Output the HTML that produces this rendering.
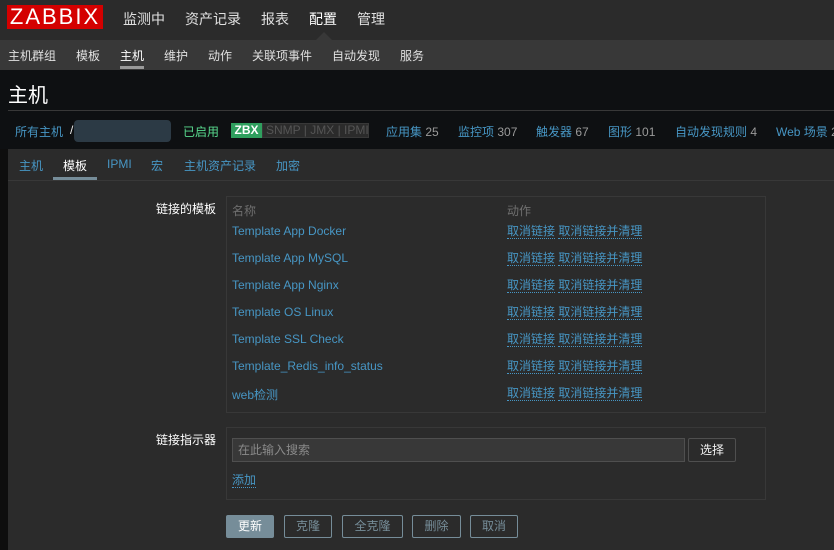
<!DOCTYPE html>
<html><head><meta charset="utf-8"><style>
*{margin:0;padding:0;box-sizing:border-box}
body{width:834px;height:550px;overflow:hidden;background:#0e0e0e;font-family:"Liberation Sans","Noto Sans CJK SC",sans-serif;font-size:12px;color:#f2f2f2;position:relative}
.a{position:absolute;white-space:nowrap}
.lk{color:#4796c4}
.dl{color:#4796c4;border-bottom:1px dotted #4796c4;line-height:14px}
.g{color:#9a9a9a}
.btn{position:absolute;top:515px;height:23px;border:1px solid #768d99;color:#768d99;font-size:12px;text-align:center;line-height:21px;border-radius:2px}
</style></head><body>
<div class="a" style="left:0;top:0;width:834px;height:40px;background:#2b2b2b"></div>
<div class="a" style="left:7px;top:5px;width:96px;height:24px;background:#d40000;color:#fff;font-size:22px;line-height:24px;text-align:center;letter-spacing:2px">ZABBIX</div>
<div class="a" style="top:9px;left:123px;font-size:14px;color:#e0e0e0">监测中</div>
<div class="a" style="top:9px;left:185px;font-size:14px;color:#e0e0e0">资产记录</div>
<div class="a" style="top:9px;left:261px;font-size:14px;color:#e0e0e0">报表</div>
<div class="a" style="top:9px;left:309px;font-size:14px;color:#fff">配置</div>
<div class="a" style="top:9px;left:357px;font-size:14px;color:#e0e0e0">管理</div>
<div class="a" style="left:316px;top:32px;width:0;height:0;border-left:8px solid transparent;border-right:8px solid transparent;border-bottom:8px solid #383838"></div>
<div class="a" style="left:0;top:40px;width:834px;height:30px;background:#383838"></div>
<div class="a" style="top:47px;left:8px;color:#e0e0e0">主机群组</div>
<div class="a" style="top:47px;left:76px;color:#e0e0e0">模板</div>
<div class="a" style="top:47px;left:120px;color:#fff">主机</div>
<div class="a" style="top:66px;left:120px;width:24px;height:3px;background:#999"></div>
<div class="a" style="top:47px;left:164px;color:#e0e0e0">维护</div>
<div class="a" style="top:47px;left:208px;color:#e0e0e0">动作</div>
<div class="a" style="top:47px;left:252px;color:#e0e0e0">关联项事件</div>
<div class="a" style="top:47px;left:332px;color:#e0e0e0">自动发现</div>
<div class="a" style="top:47px;left:400px;color:#e0e0e0">服务</div>
<div class="a" style="left:0;top:70px;width:834px;height:79px;background:#0e1012"></div>
<div class="a" style="top:79px;left:8px;font-size:20px;color:#fff">主机</div>
<div class="a" style="top:110px;left:8px;width:826px;height:1px;background:#383838"></div>
<div class="a lk" style="top:123px;left:15px">所有主机</div>
<div class="a" style="top:123px;left:70px">/</div>
<div class="a" style="top:120px;left:74px;width:97px;height:22px;background:#2c3a45;border-radius:4px"></div>
<div class="a" style="top:123px;left:183px;color:#59db8f">已启用</div>
<div class="a" style="top:123px;left:231px;width:31px;height:15px;background:#2f9f5e;color:#fff;font-weight:bold;text-align:center;line-height:15px">ZBX</div>
<div class="a" style="top:123px;left:262px;width:107px;height:15px;background:#2b2b2b;border:1px solid #383838;color:#555;line-height:13px;padding-left:3px">SNMP | JMX | IPMI</div>
<div class="a" style="top:123px;left:386px"><span class="lk">应用集</span> <span class="g">25</span></div>
<div class="a" style="top:123px;left:458px"><span class="lk">监控项</span> <span class="g">307</span></div>
<div class="a" style="top:123px;left:536px"><span class="lk">触发器</span> <span class="g">67</span></div>
<div class="a" style="top:123px;left:608px"><span class="lk">图形</span> <span class="g">101</span></div>
<div class="a" style="top:123px;left:675px"><span class="lk">自动发现规则</span> <span class="g">4</span></div>
<div class="a" style="top:123px;left:776px"><span class="lk">Web 场景</span> <span class="g">2</span></div>
<div class="a" style="left:8px;top:149px;width:826px;height:401px;background:#2b2b2b"></div>
<div class="a lk" style="top:157px;left:19px">主机</div>
<div class="a" style="top:157px;left:63px;color:#fff">模板</div>
<div class="a lk" style="top:157px;left:107px">IPMI</div>
<div class="a lk" style="top:157px;left:151px">宏</div>
<div class="a lk" style="top:157px;left:184px">主机资产记录</div>
<div class="a lk" style="top:157px;left:276px">加密</div>
<div class="a" style="top:180px;left:8px;width:826px;height:1px;background:#383838"></div>
<div class="a" style="top:177px;left:53px;width:44px;height:3px;background:#768d99"></div>
<div class="a" style="top:200px;left:156px;color:#fff">链接的模板</div>
<div class="a" style="top:196px;left:226px;width:540px;height:217px;border:1px solid #383838"></div>
<div class="a g" style="top:202px;left:232px;color:#6f6f6f">名称</div>
<div class="a g" style="top:202px;left:507px;color:#6f6f6f">动作</div>
<div class="a lk" style="top:224px;left:232px">Template App Docker</div>
<div class="a lk" style="top:251px;left:232px">Template App MySQL</div>
<div class="a lk" style="top:278px;left:232px">Template App Nginx</div>
<div class="a lk" style="top:305px;left:232px">Template OS Linux</div>
<div class="a lk" style="top:332px;left:232px">Template SSL Check</div>
<div class="a lk" style="top:359px;left:232px">Template_Redis_info_status</div>
<div class="a lk" style="top:386px;left:232px">web检测</div>
<div class="a" style="top:224px;left:507px"><span class="dl">取消链接</span> <span class="dl">取消链接并清理</span></div>
<div class="a" style="top:251px;left:507px"><span class="dl">取消链接</span> <span class="dl">取消链接并清理</span></div>
<div class="a" style="top:278px;left:507px"><span class="dl">取消链接</span> <span class="dl">取消链接并清理</span></div>
<div class="a" style="top:305px;left:507px"><span class="dl">取消链接</span> <span class="dl">取消链接并清理</span></div>
<div class="a" style="top:332px;left:507px"><span class="dl">取消链接</span> <span class="dl">取消链接并清理</span></div>
<div class="a" style="top:359px;left:507px"><span class="dl">取消链接</span> <span class="dl">取消链接并清理</span></div>
<div class="a" style="top:386px;left:507px"><span class="dl">取消链接</span> <span class="dl">取消链接并清理</span></div>
<div class="a" style="top:431px;left:156px;color:#fff">链接指示器</div>
<div class="a" style="top:427px;left:226px;width:540px;height:73px;border:1px solid #383838"></div>
<div class="a" style="top:438px;left:232px;width:453px;height:24px;background:#383838;border:1px solid #4f4f4f;color:#8a8a8a;line-height:22px;padding-left:5px">在此输入搜索</div>
<div class="a" style="top:438px;left:688px;width:48px;height:24px;background:#2b2b2b;border:1px solid #4f4f4f;color:#f2f2f2;line-height:22px;text-align:center;border-radius:2px">选择</div>
<div class="a" style="top:473px;left:232px"><span class="dl">添加</span></div>
<div class="btn" style="left:226px;width:48px;background:#768d99;color:#fff">更新</div>
<div class="btn" style="left:284px;width:48px">克隆</div>
<div class="btn" style="left:342px;width:61px">全克隆</div>
<div class="btn" style="left:412px;width:49px">删除</div>
<div class="btn" style="left:470px;width:48px">取消</div>
</body></html>
